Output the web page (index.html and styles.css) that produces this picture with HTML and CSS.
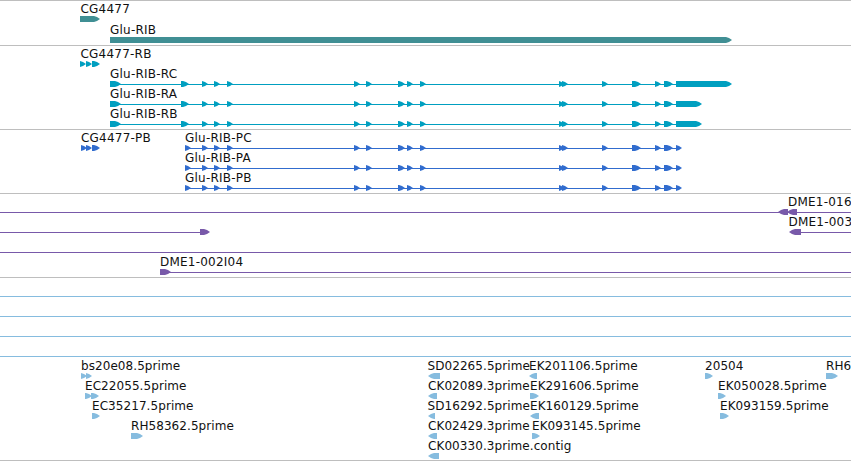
FILE: index.html
```html
<!DOCTYPE html>
<html lang="en">
<head>
  <meta charset="UTF-8">
  <title>Region Glu-RIB</title>
  <link rel="stylesheet" href="styles.css">
</head>
<body>
<main class="browser">
  <svg class="track genes" id="genes" height="44"></svg>
  <svg class="track transcripts" id="transcripts" height="83"></svg>
  <svg class="track proteins" id="proteins" height="63"></svg>
  <svg class="track clones" id="clones" height="83"></svg>
  <svg class="track ests" id="ests" height="182"></svg>
</main>
<script src="script.js"></script>
</body>
</html>
```
FILE: styles.css
```css
body {
  margin: 0;
  background-color: #fff;
  font-family: "DejaVu Sans", sans-serif;
  font-size: 12px;
  overflow: hidden;
}
.browser {
  display: flex;
  flex-direction: column;
  border-bottom: 1px solid #bebebe;
}
.track {
  display: block;
  width: 100%;
  border-top: 1px solid #bebebe;
}
.track text {
  fill: #111;
  letter-spacing: 0.22px;
}
.track rect {
  shape-rendering: crispEdges;
}
.genes {
  fill: #408f94;
}
.transcripts {
  fill: #009fc0;
}
.proteins {
  fill: #316cce;
}
.clones {
  fill: #7859a9;
}
.ests {
  fill: #86bcdf;
}
.ests text {
  letter-spacing: 0.07px;
}
```
FILE: script.js
```js
const SVG = "http://www.w3.org/2000/svg";
const WIDTH = 851;

// inner exons shared by all Glu-RIB isoforms
const exons = [[202, 208], [214, 220], [227, 233], [354, 360], [366, 372],
  [398, 405], [407, 413], [420, 426], [559, 564], [562, 568], [602, 608],
  [632, 641], [655, 661], [664, 673]];

function transcript(name, end) {
  return { name: name, x: 110, line: [110, end - 5], parts: [[110, 121], [181, 189], ...exons, [676, end]] };
}

function protein(name) {
  return { name: name, x: 185, line: [185, 677], parts: [[185, 191], ...exons, [676, 682]] };
}

// a part written as [end, start] points to the left
const tracks = {
  genes: { step: 21, rows: [
    [{ name: "CG4477", x: 80.5, parts: [[80, 100]] }],
    [{ name: "Glu-RIB", x: 110, parts: [[110, 732]] }]
  ] },
  transcripts: { step: 20, rows: [
    [{ name: "CG4477-RB", x: 80.5, parts: [[80, 86], [86, 92], [92, 100]] }],
    [transcript("Glu-RIB-RC", 732)],
    [transcript("Glu-RIB-RA", 702)],
    [transcript("Glu-RIB-RB", 702)]
  ] },
  proteins: { step: 20, rows: [
    [{ name: "CG4477-PB", x: 81, parts: [[81, 87], [86, 92], [92, 100]] }, protein("Glu-RIB-PC")],
    [protein("Glu-RIB-PA")],
    [protein("Glu-RIB-PB")]
  ] },
  clones: { step: 20, rows: [
    [{ line: [0, 780], parts: [[788, 778]] }, { name: "DME1-016", x: 788, line: [788, WIDTH], parts: [[797, 787]] }],
    [{ line: [0, 202], parts: [[200, 210]] }, { name: "DME1-003", x: 788.5, line: [795, WIDTH], parts: [[801, 789]] }],
    [{ line: [0, WIDTH], parts: [] }],
    [{ name: "DME1-002I04", x: 160, line: [165, WIDTH], parts: [[160, 171]] }]
  ] },
  ests: { step: 20, rows: [
    [{ line: [0, WIDTH], parts: [] }],
    [{ line: [0, WIDTH], parts: [] }],
    [{ line: [0, WIDTH], parts: [] }],
    [{ line: [0, WIDTH], parts: [] }],
    [
      { name: "bs20e08.5prime", x: 81, parts: [[81, 87], [86, 92]] },
      { name: "SD02265.5prime", x: 427.5, parts: [[440, 428]] },
      { name: "EK201106.5prime", x: 529, parts: [[537, 529]] },
      { name: "20504", x: 705, parts: [[705, 713]] },
      { name: "RH6", x: 826, parts: [[826, 838]] }
    ],
    [
      { name: "EC22055.5prime", x: 85, parts: [[85, 92], [91, 99]] },
      { name: "CK02089.3prime", x: 428, parts: [[437, 428]] },
      { name: "EK291606.5prime", x: 530, parts: [[530, 539]] },
      { name: "EK050028.5prime", x: 718, parts: [[718, 726]] }
    ],
    [
      { name: "EC35217.5prime", x: 92, parts: [[92, 100]] },
      { name: "SD16292.5prime", x: 427.5, parts: [[435, 428]] },
      { name: "EK160129.5prime", x: 530, parts: [[539, 530]] },
      { name: "EK093159.5prime", x: 720, parts: [[720, 729]] }
    ],
    [
      { name: "RH58362.5prime", x: 131, parts: [[131, 143]] },
      { name: "CK02429.3prime", x: 428, parts: [[437, 428]] },
      { name: "EK093145.5prime", x: 532, parts: [[532, 540]] }
    ],
    [{ name: "CK00330.3prime.contig", x: 428, parts: [[439, 428]] }]
  ] }
};

function add(parent, tag, attrs) {
  const el = document.createElementNS(SVG, tag);
  for (const key in attrs) {
    el.setAttribute(key, attrs[key]);
  }
  parent.appendChild(el);
  return el;
}

function drawPart(svg, from, to, y) {
  const dir = to > from ? 1 : -1;
  const head = Math.min(6, Math.abs(to - from));
  const neck = to - dir * head;
  const mid = to - dir * head / 2;
  add(svg, "polygon", {
    points: `${from},${y} ${neck},${y} ${mid},${y + 1} ${to},${y + 3} ${mid},${y + 5} ${neck},${y + 6} ${from},${y + 6}`
  });
}

for (const id in tracks) {
  const svg = document.getElementById(id);
  tracks[id].rows.forEach((row, i) => {
    const top = i * tracks[id].step;
    row.forEach(item => {
      if (item.line) {
        add(svg, "rect", { x: item.line[0], y: top + 18, width: item.line[1] - item.line[0], height: 1 });
      }
      item.parts.forEach(part => drawPart(svg, part[0], part[1], top + 15));
      if (item.name) {
        add(svg, "text", { x: item.x, y: top + 12 }).textContent = item.name;
      }
    });
  });
}
```
